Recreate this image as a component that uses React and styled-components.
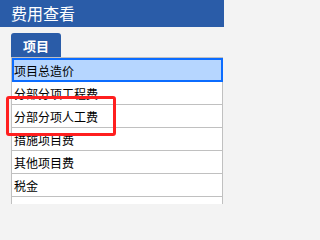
import React from 'react';
import styled, { createGlobalStyle } from 'styled-components';

const GlobalStyle = createGlobalStyle`
  html, body {
    margin: 0;
    padding: 0;
    background: #f3f3f3;
    overflow: hidden;
  }
  body {
    font-family: "Noto Sans CJK SC", "Liberation Sans", sans-serif;
  }
`;

const Page = styled.div`
  width: 224px;
  height: 204px;
  display: flex;
  flex-direction: column;
  overflow: hidden;
`;

const Header = styled.div`
  height: 27px;
  flex-shrink: 0;
  background: #2a5ca8;
  color: #fff;
  font-size: 16px;
  line-height: 27px;
  padding-left: 11px;
`;

const Body = styled.div`
  position: relative;
  flex: 1;
  padding: 6px 1px 0 11px;
  display: flex;
  flex-direction: column;
`;

const Tab = styled.div`
  width: 50px;
  height: 24px;
  background: #2a5ca8;
  border-radius: 3px 3px 0 0;
  color: #fff;
  font-size: 13px;
  font-weight: bold;
  display: flex;
  align-items: center;
  justify-content: center;
`;

const Grid = styled.div`
  flex: 1;
  background: #fff;
  border: 1px solid #c0c0c0;
  border-bottom: none;
  display: flex;
  flex-direction: column;
`;

const Row = styled.div`
  box-sizing: border-box;
  height: ${p => (p.$selected ? '24px' : '23px')};
  flex-shrink: 0;
  display: flex;
  align-items: center;
  font-size: 12px;
  color: #000;
  padding-left: ${p => (p.$selected ? '0' : '2px')};
  background: ${p => (p.$selected ? '#b6d6ff' : '#fff')};
  border-bottom: 1px solid #c0c0c0;
  ${p => p.$selected && `
    border: 2px solid #0b6cff;
    margin-right: -1px;
  `}
`;

const Highlight = styled.div`
  position: absolute;
  left: 6px;
  top: 69px;
  width: 110px;
  height: 40px;
  box-sizing: border-box;
  border: 3px solid #ff1f1f;
  border-radius: 3px;
  pointer-events: none;
`;

const items = [
  '项目总造价',
  '分部分项工程费',
  '分部分项人工费',
  '措施项目费',
  '其他项目费',
  '税金',
  '',
];

export default function App() {
  return (
    <Page>
      <GlobalStyle />
      <Header>费用查看</Header>
      <Body>
        <Tab>项目</Tab>
        <Grid>
          {items.map((name, i) => (
            <Row key={i} $selected={i === 0}>{name}</Row>
          ))}
        </Grid>
        <Highlight />
      </Body>
    </Page>
  );
}
